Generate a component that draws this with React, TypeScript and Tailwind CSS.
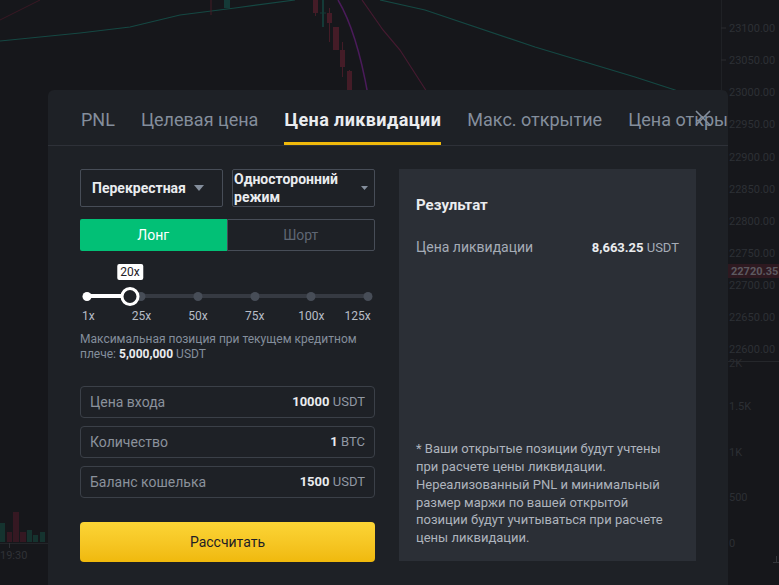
import React from "react";

const priceLabels: [string, number][] = [
  ["23100.00", 28],
  ["23050.00", 60],
  ["23000.00", 92],
  ["22950.00", 124],
  ["22900.00", 157],
  ["22850.00", 189],
  ["22800.00", 221],
  ["22750.00", 253],
  ["22700.00", 285],
  ["22650.00", 317],
  ["22600.00", 349],
];
const volLabels: [string, number][] = [
  ["1.5K", 406],
  ["1K", 452],
  ["500", 497],
  ["0", 543],
];

function ChartBackground() {
  return (
    <svg
      className="absolute inset-0"
      width={779}
      height={585}
      viewBox="0 0 779 585"
      style={{ fontFamily: "Roboto, sans-serif" }}
    >
      <rect x={0} y={0} width={779} height={585} fill="#16171b" />
      <path d="M0,20 L40,0" stroke="#3a1924" strokeWidth={1} fill="none" />
      <path
        d="M0,41 L80,33 L130,27 L180,15 L235,8 L295,0 M380,0 L425,10 L535,47 L635,77 L675,90 L721,110"
        stroke="#154843"
        strokeWidth={1.2}
        fill="none"
      />
      <path d="M338,0 C350,20 360,50 368,95" stroke="#4a1b5a" strokeWidth={1.5} fill="none" />
      <path d="M362,0 L383,30 L400,50 L427,92" stroke="#451a30" strokeWidth={1.2} fill="none" />
      <line x1={211} y1={0} x2={211} y2={15} stroke="#441c27" />
      <rect x={224} y={0} width={6} height={8} fill="#143a37" />
      <line x1={315.5} y1={0} x2={315.5} y2={16} stroke="#441c27" />
      <rect x={313} y={0} width={5} height={13} fill="#441c27" />
      <line x1={323} y1={0} x2={323} y2={27} stroke="#143a37" strokeWidth={2} />
      <line x1={320} y1={13} x2={326} y2={13} stroke="#143a37" />
      <line x1={329.5} y1={8} x2={329.5} y2={42} stroke="#441c27" />
      <rect x={327} y={13} width={5} height={10} fill="#441c27" />
      <rect x={333} y={27} width={6} height={23} fill="#441c27" />
      <line x1={342.5} y1={42} x2={342.5} y2={77} stroke="#441c27" />
      <rect x={340} y={50} width={5} height={17} fill="#441c27" />
      <line x1={349.5} y1={70} x2={349.5} y2={92} stroke="#441c27" />
      <rect x={347} y={71} width={5} height={21} fill="#441c27" />
      <rect x={0} y={523} width={5} height={19} fill="#15332f" />
      <rect x={7} y={532} width={5} height={10} fill="#351822" />
      <rect x={13} y={512} width={6} height={30} fill="#351822" />
      <rect x={20} y={532} width={6} height={10} fill="#351822" />
      <rect x={27} y={530} width={5} height={12} fill="#15332f" />
      <rect x={33} y={535} width={5} height={7} fill="#15332f" />
      <rect x={40} y={532} width={5} height={10} fill="#15332f" />
      <line x1={0} y1={543.5} x2={60} y2={543.5} stroke="#232529" />
      <line x1={9.5} y1={543} x2={9.5} y2={548} stroke="#2e3035" />
      <text x={0} y={559} fontSize={11} fill="#303237">
        19:30
      </text>
      <line x1={721.5} y1={0} x2={721.5} y2={585} stroke="#1f2125" />
      {priceLabels.map(([t, y]) => (
        <g key={t}>
          <line x1={721} y1={y} x2={726} y2={y} stroke="#2a2c31" />
          <text x={729} y={y + 4} fontSize={11} fill="#2d3035">
            {t}
          </text>
        </g>
      ))}
      <rect x={728} y={264} width={51} height={14} fill="#2e1920" />
      <text x={731} y={275} fontSize={11} fontWeight={700} fill="#5d5a60">
        22720.35
      </text>
      <line x1={728} y1={361.5} x2={779} y2={361.5} stroke="#25272b" />
      <text x={729} y={367} fontSize={11} fill="#2a2c31">
        2K
      </text>
      {volLabels.map(([t, y]) => (
        <text key={t} x={729} y={y + 4} fontSize={11} fill="#2c2f34">
          {t}
        </text>
      ))}
      <path d="M773,562.5 L779,562.5 M776.5,556 L776.5,562" stroke="#34363b" />
    </svg>
  );
}

const tabs = ["PNL", "Целевая цена", "Цена ликвидации", "Макс. открытие", "Цена открытия"];
const marks = [1, 25, 50, 75, 100, 125];
const current = 20;
const pos = (v: number) => ((v - 1) / 124) * 100;

function Caret({ small }: { small?: boolean }) {
  return small ? (
    <svg width="7" height="4" viewBox="0 0 7 4">
      <path d="M0 0 H7 L3.5 4 Z" fill="#848e9c" />
    </svg>
  ) : (
    <svg width="10" height="6" viewBox="0 0 10 6">
      <path d="M0 0 H10 L5 6 Z" fill="#848e9c" />
    </svg>
  );
}

function Slider() {
  return (
    <div className="relative mt-[13px] h-[64px] w-full">
      <div className="absolute left-[7px] right-[7px] top-0 h-full">
        <div className="absolute left-0 right-0 top-[30px] h-[4px] bg-[#363a42]" />
        <div
          className="absolute left-0 top-[30px] h-[4px] bg-white"
          style={{ width: `${pos(current)}%` }}
        />
        {marks.map((m) => (
          <div
            key={m}
            className={`absolute top-[28px] h-[9px] w-[9px] -translate-x-1/2 rounded-full ${
              m <= current ? "bg-white" : "bg-[#474d57]"
            }`}
            style={{ left: `${pos(m)}%` }}
          />
        ))}
        <div
          className="absolute top-[23px] h-[19px] w-[19px] -translate-x-1/2 rounded-full border-[3px] border-white bg-[#1e2126]"
          style={{ left: `${pos(current)}%` }}
        />
        <div
          className="absolute top-0 -translate-x-1/2 rounded-[2px] bg-white px-[3px] text-[12px] leading-[16px] text-[#1e2026]"
          style={{ left: `${pos(current)}%` }}
        >
          20x
        </div>
        {marks.map((m, i) => (
          <div
            key={"l" + m}
            className={`absolute top-[44px] text-[12px] leading-[16px] text-[#b7bdc6] ${
              i === 0 ? "-translate-x-[5px]" : i === marks.length - 1 ? "-translate-x-[90%]" : "-translate-x-1/2"
            }`}
            style={{ left: `${pos(m)}%` }}
          >
            {m}x
          </div>
        ))}
      </div>
    </div>
  );
}

function Field({ label, value, unit }: { label: string; value: string; unit: string }) {
  return (
    <div className="flex h-[32px] items-center justify-between rounded-[4px] border border-[#3b4048] px-[9px]">
      <span className="text-[14px] text-[#8b929c]">{label}</span>
      <span className="text-[13px]">
        <span className="font-bold text-[#eaecef]">{value}</span>
        <span className="text-[#9098a3]"> {unit}</span>
      </span>
    </div>
  );
}

export default function App() {
  return (
    <div className="relative h-[585px] w-[779px] overflow-hidden bg-[#16171b] font-['Roboto',sans-serif]">
      <ChartBackground />
      <div className="absolute left-[48px] top-[90px] h-[510px] w-[680px] overflow-hidden rounded-t-[6px] bg-[#1e2126]">
        <div className="relative flex h-[56px] items-stretch gap-[26px] whitespace-nowrap border-b border-[#2e3138] pl-[33px]">
          {tabs.map((t, i) => (
            <div
              key={t}
              className={`flex items-center pt-[4px] text-[18px] ${
                i === 2
                  ? "border-b-[3px] border-[#f0b90b] pt-[7px] font-bold tracking-[0.4px] text-[#eaecef]"
                  : "text-[#848e9c]"
              }`}
            >
              {t}
            </div>
          ))}
          <svg
            className="absolute left-[646px] top-[19px]"
            width="18"
            height="18"
            viewBox="0 0 18 18"
          >
            <path d="M2 2 L16 16 M16 2 L2 16" stroke="#848e9c" strokeWidth="1.6" />
          </svg>
        </div>
        <div className="flex gap-[24px] px-[32px] pt-[23px]">
          <div className="flex w-[295px] flex-col">
            <div className="flex gap-[9px]">
              <div className="flex h-[38px] w-[143px] items-center justify-between rounded-[2px] border border-[#474d57] pl-[11px] pr-[18px]">
                <span className="text-[14px] font-bold text-[#eaecef]">Перекрестная</span>
                <Caret />
              </div>
              <div className="flex h-[38px] w-[143px] items-center justify-between rounded-[2px] border border-[#474d57] pl-[1px] pr-[6px]">
                <span className="text-[14px] font-bold leading-[18px] text-[#eaecef]">
                  Односторонний
                  <br />
                  режим
                </span>
                <Caret small />
              </div>
            </div>
            <div className="mt-[12px] flex h-[32px]">
              <div className="flex flex-1 items-center justify-center rounded-l-[2px] bg-[#02c076] text-[14px] text-white">
                Лонг
              </div>
              <div className="flex flex-1 items-center justify-center rounded-r-[2px] border border-[#474d57] text-[14px] text-[#5e6673]">
                Шорт
              </div>
            </div>
            <Slider />
            <div className="mt-[4px] text-[12px] leading-[15px] text-[#848e9c]">
              Максимальная позиция при текущем кредитном плече:{" "}
              <span className="font-bold text-[#eaecef]">5,000,000</span> USDT
            </div>
            <div className="mt-[24px] flex flex-col gap-[8px]">
              <Field label="Цена входа" value="10000" unit="USDT" />
              <Field label="Количество" value="1" unit="BTC" />
              <Field label="Баланс кошелька" value="1500" unit="USDT" />
            </div>
            <button className="mt-[24px] h-[40px] rounded-[4px] bg-gradient-to-b from-[#fcd535] to-[#f0b90b] text-[14px] text-[#1e2026]">
              Рассчитать
            </button>
          </div>
          <div className="flex h-[392px] w-[297px] flex-col justify-between bg-[#2b2f36] px-[17px] pb-[14px] pt-[25px]">
            <div>
              <div className="text-[15px] font-bold leading-[22px] text-[#eaecef]">Результат</div>
              <div className="mt-[21px] flex items-center justify-between">
                <span className="text-[14px] text-[#a5acb6]">Цена ликвидации</span>
                <span className="text-[13px]">
                  <span className="font-bold text-[#eaecef]">8,663.25</span>
                  <span className="text-[#a5acb6]"> USDT</span>
                </span>
              </div>
            </div>
            <div className="text-[13px] leading-[17.8px] text-[#aeb4bd]">
              * Ваши открытые позиции будут учтены при расчете цены ликвидации. Нереализованный PNL и
              минимальный размер маржи по вашей открытой позиции будут учитываться при расчете цены
              ликвидации.
            </div>
          </div>
        </div>
      </div>
    </div>
  );
}
